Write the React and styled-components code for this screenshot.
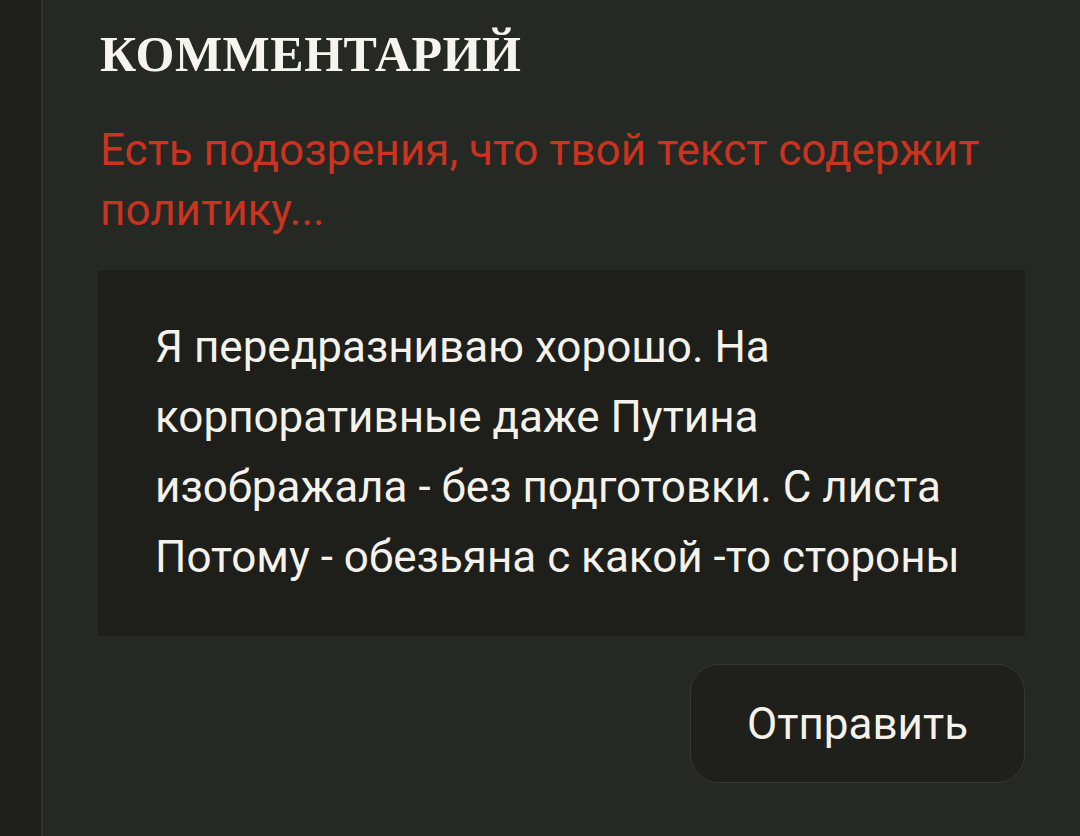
import React from "react"
import styled, { createGlobalStyle } from "styled-components"

const GlobalStyle = createGlobalStyle`
  html, body {
    margin: 0;
    padding: 0;
    height: 100%;
    background: #1e1f1b;
    overflow: hidden;
  }
  #root {
    height: 100%;
  }
`

const Page = styled.div`
  display: flex;
  height: 836px;
  background: #1e1f1b;
`

const Gutter = styled.div`
  width: 41px;
  flex-shrink: 0;
  background: #1e1f1b;
  border-right: 2px solid #30322e;
`

const Panel = styled.section`
  flex: 1;
  background: #262824;
  padding: 22px 55px 0 55px;
  display: flex;
  flex-direction: column;
`

const Title = styled.h2`
  margin: 0;
  padding-left: 2px;
  font-family: "Liberation Serif", "DejaVu Serif", serif;
  font-weight: 700;
  font-size: 50px;
  line-height: 64px;
  color: #f6f4ec;
  letter-spacing: 0.5px;
`

const Warning = styled.p`
  margin: 34px 0 0;
  padding-left: 2px;
  font-family: Roboto, "Noto Sans", sans-serif;
  font-size: 44px;
  line-height: 60px;
  color: #c9331f;
`

const TextBox = styled.div`
  margin-top: 30px;
  background: #1e1f1b;
  padding: 42px 40px 44px 57px;
  font-family: Roboto, "Noto Sans", sans-serif;
  font-size: 44px;
  line-height: 70px;
  color: #f4f2ea;
`

const Actions = styled.div`
  display: flex;
  justify-content: flex-end;
  margin-top: 28px;
`

const SendButton = styled.button`
  width: 335px;
  height: 119px;
  border-radius: 28px;
  border: 1px solid #363833;
  background: #1f201c;
  color: #f4f2ea;
  font-family: Roboto, "Noto Sans", sans-serif;
  font-size: 44px;
  cursor: pointer;
`

export default function App() {
  return (
    <>
      <GlobalStyle />
      <Page>
        <Gutter />
        <Panel>
          <Title>КОММЕНТАРИЙ</Title>
          <Warning>
            Есть подозрения, что твой текст содержит
            <br />
            политику...
          </Warning>
          <TextBox>
            Я передразниваю хорошо. На
            <br />
            корпоративные даже Путина
            <br />
            изображала - без подготовки. С листа
            <br />
            Потому - обезьяна с какой -то стороны
          </TextBox>
          <Actions>
            <SendButton>Отправить</SendButton>
          </Actions>
        </Panel>
      </Page>
    </>
  )
}
